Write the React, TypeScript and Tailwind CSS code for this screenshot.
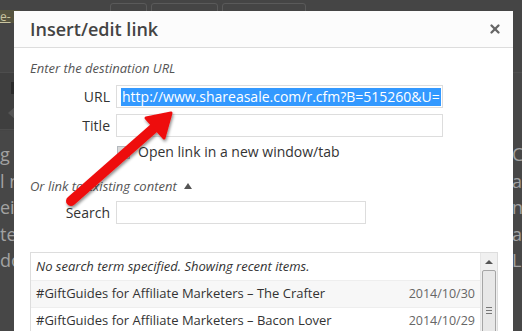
import { X } from 'lucide-react'

const rows = [
  { title: '#GiftGuides for Affiliate Marketers – The Crafter', date: '2014/10/30' },
  { title: '#GiftGuides for Affiliate Marketers – Bacon Lover', date: '2014/10/29' },
]

function Backdrop() {
  return (
    <div className="absolute inset-0 overflow-hidden bg-[#454545] text-[#a9a9a9]">
      {/* toolbar buttons peeking above the modal */}
      <div className="flex gap-[4px] pl-[110px] pt-[3px]">
        <div className="h-[20px] w-[37px] rounded-[3px] border border-[#5a5a5a]" />
        <div className="h-[20px] w-[67px] rounded-[3px] border border-[#5a5a5a]" />
        <div className="h-[20px] w-[84px] rounded-[3px] border border-[#5a5a5a]" />
      </div>
      <div className="absolute left-0 top-[10px] h-[13px] w-[20px] bg-[#56543f] text-[12px] leading-[13px] text-[#c9c4a0] underline">e-</div>
      <div className="absolute left-0 top-[72px] h-[58px] w-[14px] border-y border-[#4d4d4d] bg-[#3f3f3f]">
        <div className="ml-[11px] mt-[9px] h-[12px] w-[4px] bg-[#2a2a2a]" />
        <div className="ml-[8px] mt-[12px] h-0 w-0 border-y-[7px] border-r-[8px] border-y-transparent border-r-[#555]" />
      </div>
      <div className="absolute left-0 top-[131px] h-[200px] w-[14px] bg-[#474747]" />
      <div className="absolute left-0 top-[141px] flex flex-col text-[18px] leading-[26.5px] text-[#a2a2a2]" style={{ fontFamily: '"Open Sans", sans-serif' }}>
        <span>g a</span>
        <span>l n</span>
        <span>ein</span>
        <span>te</span>
        <span>do</span>
      </div>
      <div className="absolute left-[513px] top-[72px] h-[259px] w-[9px] border-t border-[#4f4f4f] bg-[#474747]" />
      <div className="absolute left-[512px] top-[141px] flex flex-col text-[18px] leading-[26.5px] text-[#a2a2a2]" style={{ fontFamily: '"Open Sans", sans-serif' }}>
        <span>C</span>
        <span>a</span>
        <span>ne</span>
        <span>a</span>
        <span>L</span>
      </div>
    </div>
  )
}

function Arrow() {
  return (
    <svg className="pointer-events-none absolute left-0 top-0" width="522" height="331" viewBox="0 0 522 331">
      <defs>
        <filter id="sh" x="-20%" y="-20%" width="140%" height="140%">
          <feDropShadow dx="1" dy="2" stdDeviation="1.5" floodColor="#000" floodOpacity="0.45" />
        </filter>
      </defs>
      <g filter="url(#sh)">
        <line x1="71" y1="201" x2="154" y2="128" stroke="#ee1111" strokeWidth="10" strokeLinecap="round" />
        <polygon points="171,113 164,138 146,118" fill="#ee1111" stroke="#ee1111" strokeWidth="3" strokeLinejoin="round" />
      </g>
    </svg>
  )
}

export default function App() {
  return (
    <div className="relative h-[331px] w-[522px] overflow-hidden" style={{ fontFamily: '"Open Sans", "Noto Sans", sans-serif' }}>
      <Backdrop />
      <div className="relative pl-[14px] pt-[11px]">
        <div className="h-[330px] w-[499px] bg-white text-[#333]">
          {/* header */}
          <div className="flex h-[37px] items-center justify-between border-b border-[#dddddd] bg-[#fcfcfc] pl-[16px] pr-[11px]">
            <h1 className="text-[18px] font-semibold leading-none text-[#444]">Insert/edit link</h1>
            <X size={14} strokeWidth={4} className="text-[#666]" />
          </div>

          {/* body */}
          <div className="px-[16px] pt-[11px]">
            <p className="text-[13px] italic leading-[18px] text-[#555]">Enter the destination URL</p>
            <div className="mt-[8px] flex flex-col gap-[6px]">
              <div className="flex items-center">
                <span className="w-[86px] pr-[6px] text-right text-[14px] text-[#333]">URL</span>
                <div className="flex h-[23px] w-[327px] items-center border border-[#dddddd] pl-[4px]">
                  <span className="bg-[#3399ff] px-[1px] text-[14px] leading-[18px] text-white">http://www.shareasale.com/r.cfm?B=515260&amp;U=</span>
                </div>
              </div>
              <div className="flex items-center">
                <span className="w-[86px] pr-[6px] text-right text-[14px] text-[#333]">Title</span>
                <div className="h-[23px] w-[327px] border border-[#dddddd]" />
              </div>
              <div className="flex items-center pl-[87px]">
                <div className="h-[13px] w-[13px] border border-[#b4b9be] bg-[#d8d8d8]" />
                <span className="ml-[8px] text-[14px] leading-[18px] text-[#333]">Open link in a new window/tab</span>
              </div>
            </div>

            <p className="mt-[16px] flex items-center gap-[7px] text-[13px] italic leading-[18px] text-[#555]">
              Or link to existing content
              <span className="h-0 w-0 border-x-[4px] border-b-[6px] border-x-transparent border-b-[#555] not-italic" />
            </p>

            <div className="mt-[6px] flex items-center">
              <span className="w-[86px] pr-[6px] text-right text-[14px] text-[#333]">Search</span>
              <div className="h-[23px] w-[250px] border border-[#dddddd]" />
            </div>

            {/* results */}
            <div className="mt-[28px] flex h-[100px] w-[468px] border border-[#dddddd]">
              <div className="flex-1">
                <div className="flex h-[28px] items-center border-b border-[#eeeeee] pl-[5px] text-[13px] italic text-[#333]">
                  No search term specified. Showing recent items.
                </div>
                {rows.map((r, i) => (
                  <div
                    key={r.date}
                    className={`flex h-[27px] items-center justify-between border-b border-[#eeeeee] pl-[5px] pr-[5px] text-[13px] text-[#333] ${i === 0 ? 'bg-[#f7f7f7]' : 'bg-white'}`}
                  >
                    <span>{r.title}</span>
                    <span className="text-[12.5px] text-[#666]">{r.date}</span>
                  </div>
                ))}
              </div>
              <div className="flex w-[17px] flex-col items-center border-l border-[#e6e6e6] bg-[#f0f0f0]">
                <div className="mt-[7px] h-0 w-0 border-x-[4px] border-b-[4px] border-x-transparent border-b-[#555]" />
                <div className="mt-[6px] flex h-[80px] w-[14px] flex-col items-center justify-center gap-[2px] rounded-[2px] border border-[#a6a6a6] bg-[#e8e8e8]">
                  <div className="h-px w-[6px] bg-[#777]" />
                  <div className="h-px w-[6px] bg-[#777]" />
                  <div className="h-px w-[6px] bg-[#777]" />
                </div>
              </div>
            </div>
          </div>
        </div>
      </div>
      <Arrow />
    </div>
  )
}
